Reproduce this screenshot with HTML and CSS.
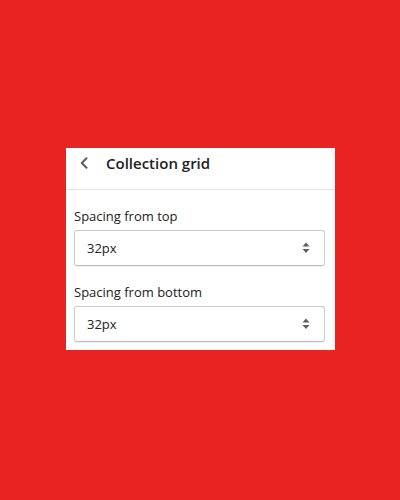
FILE: index.html
```html
<!doctype html>
<html lang="en">
    <head>
        <meta charset="UTF-8" />
        <meta name="viewport" content="width=device-width, initial-scale=1.0" />
        <title>Collection grid</title>
        <link rel="stylesheet" href="styles.css">
    </head>
    <body>
        <div class="panel">
            <div class="panel-header">
                <button class="back-button" aria-label="Back">
                    <svg width="8" height="12" viewBox="0 0 8 12">
                        <path d="M6.5 1.2 L1.8 6 L6.5 10.8" fill="none" stroke="#5c5f62" stroke-width="2" stroke-linecap="round" stroke-linejoin="round" />
                    </svg>
                </button>
                <h2 class="panel-title">Collection grid</h2>
            </div>
            <div class="panel-body">
                <div class="field">
                    <label class="field-label">Spacing from top</label>
                    <div class="select">
                        <span class="select-value">32px</span>
                        <svg class="select-arrows" width="8" height="12" viewBox="0 0 8 12">
                            <path d="M4 0.5 L7.5 4.5 L0.5 4.5 Z" fill="#5c5f62" />
                            <path d="M0.5 7 L7.5 7 L4 11 Z" fill="#5c5f62" />
                        </svg>
                    </div>
                </div>
                <div class="field">
                    <label class="field-label">Spacing from bottom</label>
                    <div class="select">
                        <span class="select-value">32px</span>
                        <svg class="select-arrows" width="8" height="12" viewBox="0 0 8 12">
                            <path d="M4 0.5 L7.5 4.5 L0.5 4.5 Z" fill="#5c5f62" />
                            <path d="M0.5 7 L7.5 7 L4 11 Z" fill="#5c5f62" />
                        </svg>
                    </div>
                </div>
            </div>
        </div>
    </body>
</html>
```

FILE: styles.css
```css
body {
    font-family: "Open Sans", "Noto Sans", sans-serif;
    background-color: #e92222;
    color: #202223;
    margin: 0;
    height: 500px;
    display: flex;
    justify-content: flex-start;
    align-items: flex-start;
}
.panel {
    background: #ffffff;
    width: 269px;
    margin: 148px 0 0 66px;
}
.panel-header {
    display: flex;
    align-items: center;
    border-bottom: 1px solid #e1e3e5;
    padding: 5px 0 16px 14px;
}
.back-button {
    background: none;
    border: none;
    padding: 0;
    width: 26px;
    height: 20px;
    display: flex;
    align-items: center;
    cursor: pointer;
}
.panel-title {
    margin: 0;
    font-size: 15px;
    font-weight: 600;
    line-height: 20px;
}
.panel-body {
    padding: 16px 10px 8px 8px;
    display: flex;
    flex-direction: column;
    gap: 16px;
}
.field-label {
    display: block;
    font-size: 13px;
    line-height: 20px;
    margin-bottom: 4px;
}
.select {
    display: flex;
    align-items: center;
    justify-content: space-between;
    height: 34px;
    border: 1px solid #c9cccf;
    border-bottom-color: #babfc3;
    border-radius: 3px;
    padding: 0 14px 0 12px;
    box-shadow: 0 1px 0 rgba(0, 0, 0, 0.05);
}
.select-value {
    font-size: 13px;
    line-height: 20px;
}
```
